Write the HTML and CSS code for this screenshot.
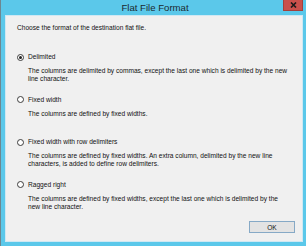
FILE: index.html
```html
<!DOCTYPE html>
<html lang="en">
<head>
<meta charset="UTF-8" />
<title>Flat File Format</title>
<link rel="stylesheet" href="styles.css">
</head>
<body>
<div class="window">
  <!-- Title bar -->
  <div class="titlebar">
    <span class="title">Flat File Format</span>
    <button class="close" aria-label="Close">
      <svg width="7" height="6" viewBox="0 0 7 6"><path d="M1 0.5 L6 5.5 M6 0.5 L1 5.5" stroke="#1a1a1a" stroke-width="1.6"/></svg>
    </button>
  </div>

  <!-- Dialog body -->
  <div class="content">
    <p class="intro">Choose the format of the destination flat file.</p>

    <div class="options">
      <div class="option">
        <label class="radio-row"><span class="radio checked"></span>Delimited</label>
        <p class="desc">The columns are delimited by commas, except the last one which is delimited by the new line character.</p>
      </div>
      <div class="option">
        <label class="radio-row"><span class="radio"></span>Fixed width</label>
        <p class="desc">The columns are defined by fixed widths.</p>
      </div>
      <div class="option">
        <label class="radio-row"><span class="radio"></span>Fixed width with row delimiters</label>
        <p class="desc">The columns are defined by fixed widths. An extra column, delimited by the new line characters, is added to define row delimiters.</p>
      </div>
      <div class="option">
        <label class="radio-row"><span class="radio"></span>Ragged right</label>
        <p class="desc">The columns are defined by fixed widths, except the last one which is delimited by the new line character.</p>
      </div>
    </div>

    <div class="actions">
      <button class="ok">OK</button>
    </div>
  </div>
</div>
</body>
</html>
```

FILE: styles.css
```css
html, body {
  margin: 0;
  padding: 0;
  background: #5bc8ea;
  font-family: "Liberation Sans", Arial, sans-serif;
}

.window {
  width: 306px;
  height: 246px;
  box-sizing: border-box;
  background: #5bc8ea;
  border-left: 1px solid #6d8791;
  padding: 0 3px 4px 4px;
  display: flex;
  flex-direction: column;
}

.titlebar {
  height: 15px;
  position: relative;
  display: flex;
  align-items: center;
  justify-content: center;
}

.title {
  font-size: 9.6px;
  color: #1b2a30;
  line-height: 14px;
  padding-left: 2px;
}

.close {
  position: absolute;
  top: 0;
  right: 0;
  width: 20px;
  height: 11px;
  padding: 0;
  border: 1px solid #a4403c;
  border-top: none;
  background: #c9504b;
  display: flex;
  align-items: center;
  justify-content: center;
}

.content {
  flex: 1;
  background: #f0f0f0;
  border: 1px solid #cfe8f3;
  padding: 8px 7px 8px 11px;
  display: flex;
  flex-direction: column;
  font-size: 6.6px;
  line-height: 8px;
  color: #111;
}

.intro {
  margin: 0;
}

.options {
  display: flex;
  flex-direction: column;
  gap: 12.5px;
  margin-top: 21px;
}

.radio-row {
  display: flex;
  align-items: center;
  height: 8px;
}

.radio {
  width: 7px;
  height: 7px;
  box-sizing: border-box;
  border: 1px solid #3c3c3c;
  border-radius: 50%;
  background: #fff;
  margin-right: 4px;
  display: flex;
  align-items: center;
  justify-content: center;
}

.radio.checked::after {
  content: "";
  width: 3px;
  height: 3px;
  border-radius: 50%;
  background: #222;
}

.desc {
  margin: 6px 0 0 11px;
  width: 262px;
  min-height: 16px;
}

.actions {
  margin-top: auto;
  display: flex;
  justify-content: flex-end;
}

.ok {
  width: 46px;
  height: 12px;
  padding: 0;
  font-family: inherit;
  font-size: 6.6px;
  color: #111;
  background: #e3e3e3;
  border: 1px solid #86a9c6;
}
```
